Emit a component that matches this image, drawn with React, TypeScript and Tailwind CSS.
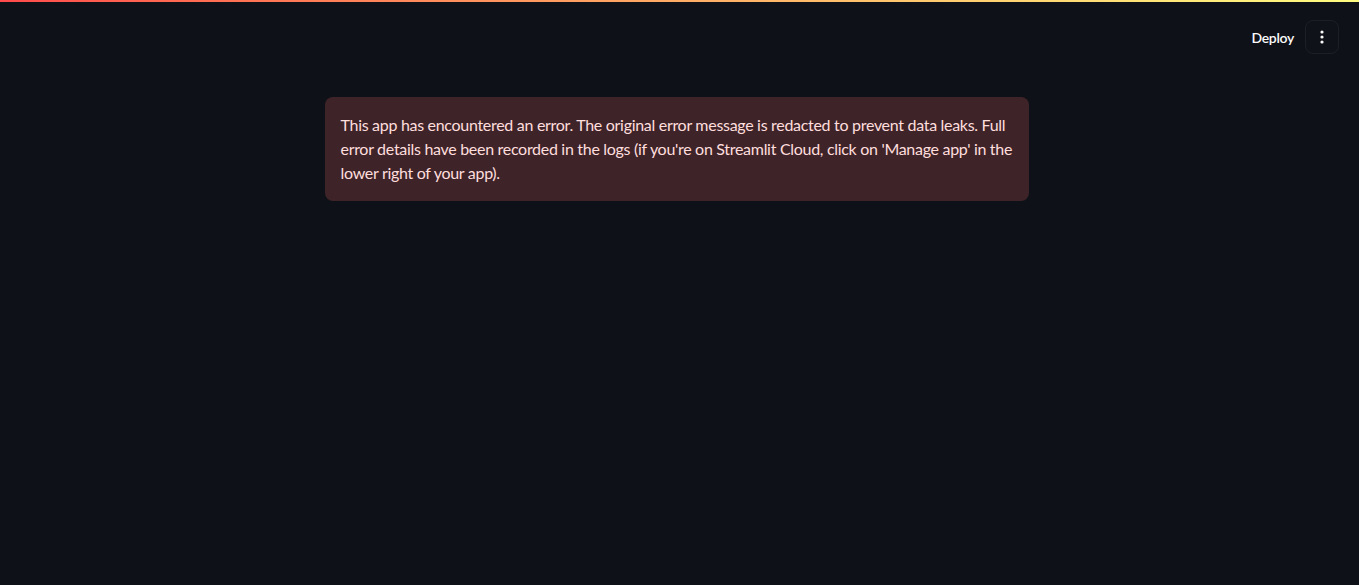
import React from "react";

export default function App() {
  return (
    <div className="w-full h-[585px] bg-[#0e1117] relative overflow-hidden" style={{ fontFamily: "Lato, 'Noto Sans', sans-serif" }}>
      <div className="h-[2px] w-full bg-gradient-to-r from-[#ff4b4b] to-[#fffd80]" />
      <div className="flex justify-end items-center h-[60px] pr-[20px] pt-[10px] gap-[11px]">
        <span className="text-[14px] font-semibold text-[#fafafa] tracking-[-0.3px]">Deploy</span>
        <div className="w-[34px] h-[34px] rounded-[8px] border border-[#1c1f26] bg-[#0f1218] flex items-center justify-center">
          <svg width="16" height="16" viewBox="0 0 16 16" fill="#fafafa">
            <circle cx="8" cy="3" r="1.6" />
            <circle cx="8" cy="8" r="1.6" />
            <circle cx="8" cy="13" r="1.6" />
          </svg>
        </div>
      </div>
      <div className="flex justify-center pt-[35px] pr-[6px]">
        <div className="w-[704px] rounded-[8px] bg-[#3e2428] px-[16px] py-[16px] text-[16px] leading-[24px] tracking-[-0.3px] text-[#ffdede]">
          This app has encountered an error. The original error message is redacted to prevent data leaks. Full error details have been recorded in the logs (if you're on Streamlit Cloud, click on 'Manage app' in the lower right of your app).
        </div>
      </div>
    </div>
  );
}
